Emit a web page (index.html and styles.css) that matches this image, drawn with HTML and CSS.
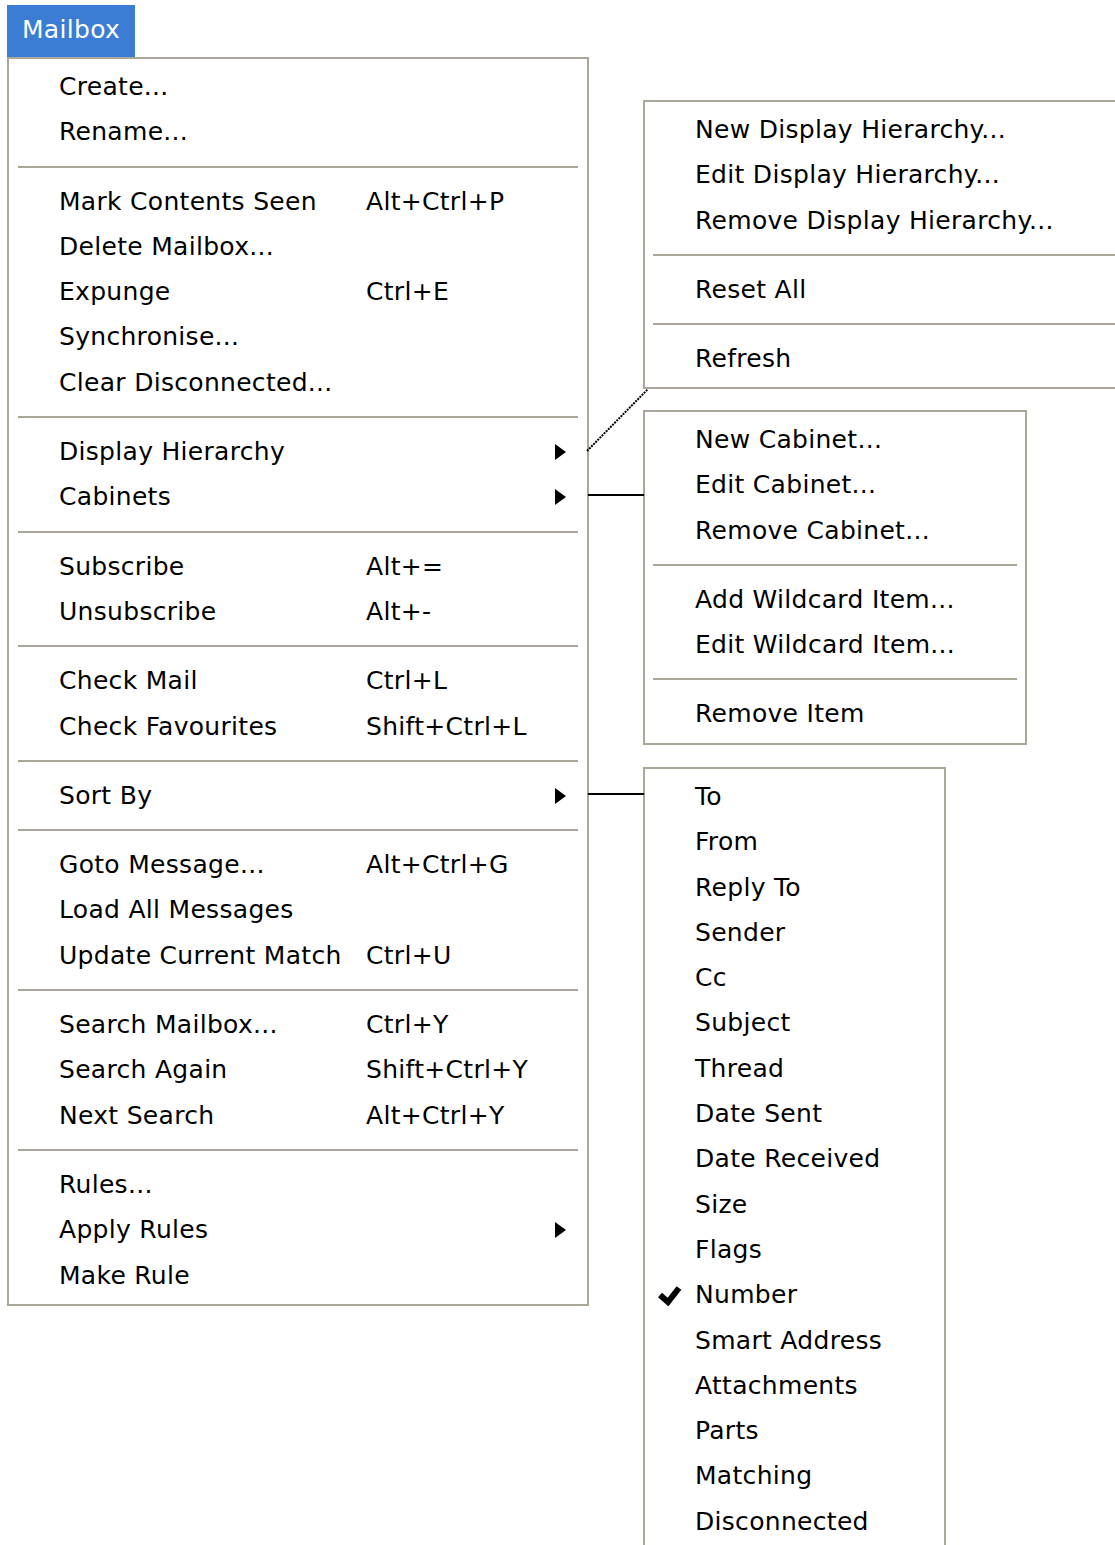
FILE: index.html
```html
<!DOCTYPE html>
<html>
	<head>
		<meta charset="utf-8" />
		<title>Mailbox menu</title>
		<link rel="stylesheet" href="styles.css">
	</head>
	<body>
		<div class="desk">
			<div class="menubar">
				<div class="menu-title">Mailbox</div>
			</div>

			<!-- main Mailbox menu -->
			<div class="menu main">
				<div class="item"><span class="check"></span><span class="label">Create...</span></div>
				<div class="item"><span class="check"></span><span class="label">Rename...</span></div>
				<div class="sep"></div>
				<div class="item"><span class="check"></span><span class="label">Mark Contents Seen</span><span class="key">Alt+Ctrl+P</span></div>
				<div class="item"><span class="check"></span><span class="label">Delete Mailbox...</span></div>
				<div class="item"><span class="check"></span><span class="label">Expunge</span><span class="key">Ctrl+E</span></div>
				<div class="item"><span class="check"></span><span class="label">Synchronise...</span></div>
				<div class="item"><span class="check"></span><span class="label">Clear Disconnected...</span></div>
				<div class="sep"></div>
				<div class="item"><span class="check"></span><span class="label">Display Hierarchy</span><span class="key"></span><span class="arrow"></span></div>
				<div class="item"><span class="check"></span><span class="label">Cabinets</span><span class="key"></span><span class="arrow"></span></div>
				<div class="sep"></div>
				<div class="item"><span class="check"></span><span class="label">Subscribe</span><span class="key">Alt+=</span></div>
				<div class="item"><span class="check"></span><span class="label">Unsubscribe</span><span class="key">Alt+-</span></div>
				<div class="sep"></div>
				<div class="item"><span class="check"></span><span class="label">Check Mail</span><span class="key">Ctrl+L</span></div>
				<div class="item"><span class="check"></span><span class="label">Check Favourites</span><span class="key">Shift+Ctrl+L</span></div>
				<div class="sep"></div>
				<div class="item"><span class="check"></span><span class="label">Sort By</span><span class="key"></span><span class="arrow"></span></div>
				<div class="sep"></div>
				<div class="item"><span class="check"></span><span class="label">Goto Message...</span><span class="key">Alt+Ctrl+G</span></div>
				<div class="item"><span class="check"></span><span class="label">Load All Messages</span></div>
				<div class="item"><span class="check"></span><span class="label">Update Current Match</span><span class="key">Ctrl+U</span></div>
				<div class="sep"></div>
				<div class="item"><span class="check"></span><span class="label">Search Mailbox...</span><span class="key">Ctrl+Y</span></div>
				<div class="item"><span class="check"></span><span class="label">Search Again</span><span class="key">Shift+Ctrl+Y</span></div>
				<div class="item"><span class="check"></span><span class="label">Next Search</span><span class="key">Alt+Ctrl+Y</span></div>
				<div class="sep"></div>
				<div class="item"><span class="check"></span><span class="label">Rules...</span></div>
				<div class="item"><span class="check"></span><span class="label">Apply Rules</span><span class="key"></span><span class="arrow"></span></div>
				<div class="item"><span class="check"></span><span class="label">Make Rule</span></div>
			</div>

			<!-- Display Hierarchy submenu -->
			<div class="menu sub sub-hier">
				<div class="item"><span class="check"></span><span class="label">New Display Hierarchy...</span></div>
				<div class="item"><span class="check"></span><span class="label">Edit Display Hierarchy...</span></div>
				<div class="item"><span class="check"></span><span class="label">Remove Display Hierarchy...</span></div>
				<div class="sep"></div>
				<div class="item"><span class="check"></span><span class="label">Reset All</span></div>
				<div class="sep"></div>
				<div class="item"><span class="check"></span><span class="label">Refresh</span></div>
			</div>

			<!-- Cabinets submenu -->
			<div class="menu sub sub-cab">
				<div class="item"><span class="check"></span><span class="label">New Cabinet...</span></div>
				<div class="item"><span class="check"></span><span class="label">Edit Cabinet...</span></div>
				<div class="item"><span class="check"></span><span class="label">Remove Cabinet...</span></div>
				<div class="sep"></div>
				<div class="item"><span class="check"></span><span class="label">Add Wildcard Item...</span></div>
				<div class="item"><span class="check"></span><span class="label">Edit Wildcard Item...</span></div>
				<div class="sep"></div>
				<div class="item"><span class="check"></span><span class="label">Remove Item</span></div>
			</div>

			<!-- Sort By submenu -->
			<div class="menu sub sub-sort">
				<div class="item"><span class="check"></span><span class="label">To</span></div>
				<div class="item"><span class="check"></span><span class="label">From</span></div>
				<div class="item"><span class="check"></span><span class="label">Reply To</span></div>
				<div class="item"><span class="check"></span><span class="label">Sender</span></div>
				<div class="item"><span class="check"></span><span class="label">Cc</span></div>
				<div class="item"><span class="check"></span><span class="label">Subject</span></div>
				<div class="item"><span class="check"></span><span class="label">Thread</span></div>
				<div class="item"><span class="check"></span><span class="label">Date Sent</span></div>
				<div class="item"><span class="check"></span><span class="label">Date Received</span></div>
				<div class="item"><span class="check"></span><span class="label">Size</span></div>
				<div class="item"><span class="check"></span><span class="label">Flags</span></div>
				<div class="item"><span class="check"><svg class="tick" width="24" height="22" viewBox="0 0 24 22"><polyline points="2,11 10,18 21,4" fill="none" stroke="#000" stroke-width="6"/></svg></span><span class="label">Number</span></div>
				<div class="item"><span class="check"></span><span class="label">Smart Address</span></div>
				<div class="item"><span class="check"></span><span class="label">Attachments</span></div>
				<div class="item"><span class="check"></span><span class="label">Parts</span></div>
				<div class="item"><span class="check"></span><span class="label">Matching</span></div>
				<div class="item"><span class="check"></span><span class="label">Disconnected</span></div>
			</div>

			<!-- lines from the arrows to their submenus -->
			<svg class="links" width="1115" height="1545">
				<line x1="587" y1="451" x2="648" y2="389" stroke="#000" stroke-width="2" stroke-dasharray="2 1"/>
				<line x1="588" y1="495" x2="644" y2="495" stroke="#000" stroke-width="2"/>
				<line x1="588" y1="794" x2="644" y2="794" stroke="#000" stroke-width="2"/>
			</svg>
		</div>
	</body>
</html>
```

FILE: styles.css
```css
body{
	margin: 0;
	background: #fff;
}
.desk{
	position: relative;
	width: 1115px;
	height: 1545px;
	overflow: hidden;
	font: 25px/45.3px "DejaVu Sans", sans-serif;
	letter-spacing: 0.3px;
	color: #000;
}
.menubar{
	display: flex;
	padding: 5px 0 0 7px;
}
.menu-title{
	width: 128px;
	height: 52px;
	box-sizing: border-box;
	padding-left: 15px;
	line-height: 50px;
	background: #3b7dd5;
	color: #fff;
}
.menu{
	box-sizing: border-box;
	background: #fff;
	border: 2px solid #aca899;
	padding: 5px 0 6px;
}
.main{
	width: 582px;
	margin-left: 7px;
}
.sub{
	position: absolute;
	left: 643px;
}
.sub-hier{
	top: 100px;
	width: 520px;
}
.sub-cab{
	top: 410px;
	width: 384px;
}
.sub-sort{
	top: 767px;
	width: 303px;
	height: 820px;
}
.item{
	display: flex;
	align-items: center;
	height: 45.3px;
	white-space: nowrap;
}
.check{
	flex: none;
	width: 50px;
	height: 22px;
}
.tick{
	display: block;
	margin-left: 13px;
}
.label{
	flex: none;
	width: 307px;
}
.sub .label{
	width: auto;
}
.key{
	flex: 1;
}
.arrow{
	flex: none;
	width: 0;
	height: 0;
	border-left: 11px solid #000;
	border-top: 8px solid transparent;
	border-bottom: 8px solid transparent;
	margin-right: 21px;
}
.sep{
	height: 2px;
	margin: 11px 9px;
	background: #aca899;
}
.sub .sep{
	margin-left: 8px;
	margin-right: 8px;
}
.sub-hier .sep{
	margin-right: 0;
}
.links{
	position: absolute;
	left: 0;
	top: 0;
	pointer-events: none;
}
```
